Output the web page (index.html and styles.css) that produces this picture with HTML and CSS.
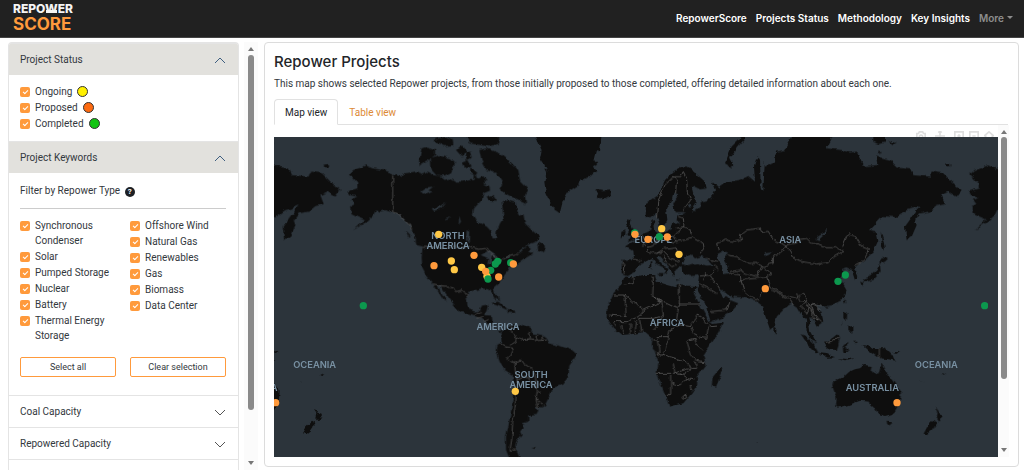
FILE: index.html
```
<!DOCTYPE html>
<html lang="en">
<head>
  <meta charset="UTF-8" />
  <meta name="viewport" content="width=device-width, initial-scale=1" />
  <title>Repower Score</title>
  <link rel="stylesheet" href="styles.css">
</head>
<body>
  <!-- NAVBAR -->
  <header class="navbar">
    <a class="logo" href="#"><span class="logo-top">REPO<span class="logo-w">W</span>ER</span><span class="logo-bottom">SCORE</span></a>
    <nav class="nav-links">
      <a href="#">RepowerScore</a>
      <a href="#">Projects Status</a>
      <a href="#">Methodology</a>
      <a href="#">Key Insights</a>
      <a class="more" href="#">More</a>
    </nav>
  </header>

  <main class="layout">
    <!-- FILTERS -->
    <aside class="sidebar">
      <div class="accordion">
        <button class="acc-header open" type="button">Project Status
          <svg class="chevron" viewBox="0 0 12 12"><path d="M1 9l5-5 5 5" /></svg>
        </button>
        <div class="acc-body status">
          <label class="check"><input type="checkbox" checked />Ongoing <i class="dot yellow"></i></label>
          <label class="check"><input type="checkbox" checked />Proposed <i class="dot orange"></i></label>
          <label class="check"><input type="checkbox" checked />Completed <i class="dot green"></i></label>
        </div>

        <button class="acc-header open" type="button">Project Keywords
          <svg class="chevron" viewBox="0 0 12 12"><path d="M1 9l5-5 5 5" /></svg>
        </button>
        <div class="acc-body">
          <p class="filter-title">Filter by Repower Type <span class="help">?</span></p>
          <div class="columns">
            <div>
              <label class="check"><input type="checkbox" checked />Synchronous Condenser</label>
              <label class="check"><input type="checkbox" checked />Solar</label>
              <label class="check"><input type="checkbox" checked />Pumped Storage</label>
              <label class="check"><input type="checkbox" checked />Nuclear</label>
              <label class="check"><input type="checkbox" checked />Battery</label>
              <label class="check"><input type="checkbox" checked />Thermal Energy Storage</label>
            </div>
            <div>
              <label class="check"><input type="checkbox" checked />Offshore Wind</label>
              <label class="check"><input type="checkbox" checked />Natural Gas</label>
              <label class="check"><input type="checkbox" checked />Renewables</label>
              <label class="check"><input type="checkbox" checked />Gas</label>
              <label class="check"><input type="checkbox" checked />Biomass</label>
              <label class="check"><input type="checkbox" checked />Data Center</label>
            </div>
          </div>
          <div class="columns buttons">
            <button class="btn" type="button">Select all</button>
            <button class="btn" type="button">Clear selection</button>
          </div>
        </div>

        <button class="acc-header" type="button">Coal Capacity
          <svg class="chevron" viewBox="0 0 12 12"><path d="M1 4l5 5 5-5" /></svg>
        </button>
        <button class="acc-header" type="button">Repowered Capacity
          <svg class="chevron" viewBox="0 0 12 12"><path d="M1 4l5 5 5-5" /></svg>
        </button>
        <div class="acc-header"></div>
      </div>
      <div class="scrollbar"><i class="up"></i><i class="thumb"></i><i class="down"></i></div>
    </aside>

    <!-- PROJECTS -->
    <section class="panel">
      <h1>Repower Projects</h1>
      <p class="intro">This map shows selected Repower projects, from those initially proposed to those completed, offering detailed information about each one.</p>
      <div class="tabs">
        <button class="tab active" type="button">Map view</button>
        <button class="tab" type="button">Table view</button>
      </div>

      <div class="map-row">
        <div class="map-column">
          <div class="modebar">
            <svg viewBox="0 0 12 12"><path d="M1 3h2l1-2h4l1 2h2v8H1z" /><circle cx="6" cy="7" r="2" /></svg>
            <svg class="pan" viewBox="0 0 12 12"><path d="M6 0v12M0 6h12M4 2l2-2 2 2" /></svg>
            <svg viewBox="0 0 12 12"><path d="M1 1h10v10H1zM4 6h4M6 4v4" /></svg>
            <svg viewBox="0 0 12 12"><path d="M1 1h10v10H1zM4 6h4" /></svg>
            <svg viewBox="0 0 12 12"><path d="M0 6l6-5 6 5M2 5v6h8V5" /></svg>
          </div>
          <svg class="map" viewBox="0 0 2172 960" preserveAspectRatio="xMidYMid slice" role="img" aria-label="World map of projects">
            <defs>
              <filter id="coast" filterUnits="userSpaceOnUse" x="-100" y="-60" width="2400" height="1100" color-interpolation-filters="sRGB">
                <feTurbulence type="fractalNoise" baseFrequency="0.05" numOctaves="3" seed="4" />
                <feDisplacementMap in="SourceGraphic" scale="14" xChannelSelector="R" yChannelSelector="G" />
              </filter>
              <g id="world">
                <!-- north america -->
                <g transform="translate(-12 -21)">
                  <path class="land" d="M237 133L250 120 275 112 290 106 310 115 345 122 368 130 390 140 405 130 420 128 440 124 455 135 470 125 490 135 510 140 525 150 545 145 560 155 580 155 600 150 610 150 612 130 620 145 628 145 640 135 652 150 640 162 658 168 660 182 640 190 635 210 612 235 608 255 620 275 650 290 660 300 668 325 678 325 680 305 690 280 700 265 698 235 695 215 710 208 735 215 745 258 760 252 765 280 785 300 808 320 800 335 770 345 745 365 752 366 768 348 782 352 778 365 790 370 765 385 745 400 735 398 740 388 722 405 715 420 700 440 690 455 668 475 672 490 682 505 678 512 665 490 655 478 635 475 615 480 598 485 590 500 592 525 600 541 614 545 630 543 636 527 654 524 650 542 642 555 665 557 668 580 680 600 700 605 722 598 722 610 700 612 688 606 668 585 650 580 635 565 610 555 570 545 545 515 520 480 510 463 503 463 510 485 530 515 520 510 502 480 490 462 470 440 457 415 455 380 458 350 440 335 425 300 418 285 400 265 385 250 367 247 345 240 330 245 318 238 310 255 290 275 250 300 285 268 265 260 245 250 240 230 255 222 245 208 262 200 240 195 232 185 262 175 262 160z" />
                  <path class="land" d="M455 55L472 50 495 58 495 75 475 92 450 106 447 90zM482 85L505 75 540 85 555 100 540 130 520 140 500 137 485 120zM490 30L520 21 548 30 550 45 525 48zM558 60L575 45 590 62 578 82zM585 10L683 10 685 40 660 50 630 45 600 40zM585 70L600 65 605 80 590 90zM578 95L592 90 602 110 585 115zM600 112L622 125 615 135 602 130zM628 60L650 55 690 70 720 95 745 120 750 155 775 180 765 195 768 222 740 208 715 195 690 180 700 160 680 130 650 120 635 90zM650 200L668 195 682 215 660 215zM800 350L812 335 820 345 825 362 818 368 802 362zM408 305L418 315 415 322zM435 330L460 350 440 345zM160 105L178 104 175 111 164 112zM676 490L688 503 690 515 684 508zM664 520L680 515 705 528 712 540 690 530zM712 540L735 542 735 549 715 548z" />
                  <path class="sea" d="M450 185L468 172 490 170 475 182 488 185 470 193zM485 235L510 228 530 215 512 235 492 243zM525 265L545 258 530 270zM568 260L573 275 566 285zM590 300L598 305 596 340 588 330zM632 375L655 362 678 376 675 386 665 378 662 400 652 402 655 385zM680 385L700 393 680 402zM704 383L718 378 712 386z" />
                  <path class="border" d="M368 130V247L385 250 400 268 418 285 425 300M458 352H600L625 358 645 355 672 378 690 395 712 380 735 375 745 365M490 462L520 468 550 470 560 485 575 480 592 500M612 555L622 548 635 548M622 565L640 560M640 575L655 568" />
                </g>

                <!-- south america -->
                <g transform="translate(708 459)">
                  <path class="land" d="M-25 130L-5 112 8 105 22 112 40 105 62 118 70 130 95 135 110 145 118 160 150 168 185 180 198 190 195 205 178 230 175 260 160 280 130 292 120 315 105 345 95 352 80 350 85 362 80 375 55 378 55 395 38 400 42 410 30 425 35 435 20 455 15 470 25 485 35 510 0 510-12 480-12 440-3 400 5 350 13 290 8 255-18 238-32 210-40 185-38 165-22 155zM65 474L78 472 74 477z" />
                  <path class="border" d="M5 108L2 130 22 142 18 155 0 165M-30 160L-15 170 10 175 5 185-8 205 5 220 15 215 35 210 42 222 65 235 75 255 82 300 95 310M40 150L62 145 58 125M80 150L78 135M100 152L98 140M22 142L40 150 60 150 80 152 110 150M15 215L15 240 20 255 22 290 15 350 8 400 5 450 0 480 20 480M22 270L48 258 68 280 82 300 78 330 85 352M78 325L100 345" />
                </g>

                <!-- greenland, iceland, europe and asia -->
                <g transform="translate(708 -21)">
                  <path class="land" d="M72 10L95 60 90 85 100 100 112 125 103 155 108 190 125 230 150 247 158 215 175 185 205 165 210 150 240 140 260 122 248 110 262 100 252 85 258 60 270 65 275 10zM255 180L265 190 260 200 280 208 303 195 300 178 280 180 270 178z" />
                  <path class="land" d="M530 110L515 110 490 125 465 150 445 195 408 222 407 258 420 265 438 252 445 268 450 292 462 287 472 270 468 235 485 210 490 188 506 192 490 220 494 246 520 246 530 250 502 256 500 270 512 282 490 277 485 297 470 305 445 307 435 300 432 270 420 275 422 302 400 312 385 325 370 335 348 350 370 362 372 387 335 390 335 432 350 438 375 425 390 403 410 392 425 382 440 402 460 412 466 424 458 435 468 430 476 418 460 405 442 385 450 378 470 400 478 418 488 437 498 438 496 420 512 410 518 408 520 430 545 438 567 435 565 455 560 480 585 520 603 577 630 565 665 545 685 520 660 510 650 498 642 508 625 480 640 480 665 500 700 502 735 510 760 530 765 555 780 598 795 590 800 560 830 530 845 520 860 530 875 555 888 570 890 605 905 630 922 640 915 630 900 600 895 565 910 570 920 590 940 575 935 550 920 525 940 530 965 525 995 510 1010 480 1008 475 990 445 1000 430 995 420 1012 415 1025 420 1035 450 1045 440 1035 415 1050 400 1070 385 1090 365 1105 330 1100 305 1080 300 1120 258 1160 262 1190 240 1210 235 1230 225 1205 262 1185 290 1190 330 1205 320 1220 285 1215 270 1230 250 1260 245 1280 228 1305 222 1295 195 1315 185 1340 200 1355 180 1325 155 1300 130 1265 125 1260 140 1210 135 1200 115 1160 110 1140 90 1102 80 1105 105 1060 108 1040 65 1020 68 995 60 950 55 967 21 970 10 850 10 825 60 798 65 795 95 765 110 765 85 760 180 752 175 750 85 742 80 732 110 735 155 715 138 690 150 650 155 625 172 605 155 615 180 605 205 575 215 565 235 545 245 558 210 548 185 545 165 570 178 590 175 585 155 550 125z" />
                  <path class="land" d="M352 265L365 268 362 280 372 300 378 325 350 336 360 320 352 310 358 300 348 285zM335 305L347 302 345 318 332 324zM422 395L427 393 427 418 421 415zM440 432L458 432 455 440zM500 445L515 447 502 449zM705 10L665 50 645 100 665 112 670 105 660 85 675 60 705 25zM1090 10L1125 21 1125 38 1105 42 1090 35zM1135 30L1157 40 1150 45zM1105 65L1120 68 1106 72zM1305 105L1320 102 1318 110zM1112 305L1122 340 1125 365 1116 350zM1108 395L1120 378 1135 385 1125 395 1110 400zM1110 400L1112 425 1095 445 1065 453 1058 448 1080 440 1100 420zM1050 455L1062 458 1056 468zM1005 505L1010 520 1002 512zM790 592L800 600 796 610 790 602z" />
                  <path class="sea" d="M518 402L530 375 540 370 555 385 575 378 600 395 612 408 590 410 560 402 535 408zM622 375L642 365 655 372 642 380 650 400 655 430 640 432 635 405 625 392zM915 325L940 310 948 290 945 312 925 330zM760 370L790 366 765 378zM545 240L555 225 560 245zM532 235L538 222 542 235z" />
                  <path class="border" d="M440 260L443 215 465 165 490 140 512 140 520 125 530 145 532 190 542 210 520 240M490 140L502 155 500 190M500 295L520 290 540 295 545 320 580 340 582 355 570 370M505 260L520 265 522 290 505 305 490 320 500 335 545 325M445 310L440 340 410 350 415 365 440 370 465 355 500 350 510 375M400 315L410 335 400 350M465 330L490 340 500 330M440 370L460 365 480 385 510 395M460 375L470 395 485 410 500 405M335 400L345 405 342 432M372 388L395 392M612 408L625 420M570 438L600 435 612 420M590 385L625 395M625 362L620 340 650 330 675 335 695 330 690 315 710 300 750 295 755 306 775 304 790 330 815 340 830 350 845 370 850 385 880 395 920 402 955 398 965 385 998 365 980 350 945 350 925 342 905 340 890 325 870 328 862 338 830 345M998 350L1010 320 1015 312 1035 318 1050 345 1075 355 1070 375 1050 400 1035 408M655 375L680 380 720 400 740 400 760 410 790 400 790 380 820 360 830 345M660 425L690 420 710 430 740 440 755 410M655 430L690 435 700 480 725 500 745 510M690 450L740 445 770 440 780 470 820 495 860 505 880 490 890 510 870 530M770 440L785 430 760 415M765 480L750 500M785 480L820 500 840 510 850 525M870 530L890 550 905 520 935 530M890 510L905 530 920 570M630 480L610 450 600 435M565 460L595 475 620 490M590 430L580 450M600 545L650 540 660 515" />
                </g>

                <!-- africa -->
                <g transform="translate(708 459)">
                  <path class="land" d="M560-10L530-10 505-20 495-8 470-15 440-25 435-45 400-45 370-38 345-40 335-15 310 10 292 48 290 85 310 115 335 135 370 132 405 125 428 145 425 165 447 210 440 250 465 312 478 350 520 340 545 310 565 280 560 260 587 225 580 195 590 180 625 130 641 98 605 102 590 82 570 45 550 8zM635 228L637 245 618 293 605 290 608 262zM735 453L742 453 740 458z" />
                  <path class="border" d="M345-15L370-20 368-40M310 15H345L400 60 455 35 428 20 430-40M345 15L348 80 300 75M400 60L385 80 350 95 310 95M428 20L500 55 508 45V-20M508 42H570M455 35L460 75 440 110 430 120M380 90L375 130M362 100V132M388 85L395 125M335 105L340 132M310 95L320 110M385 85H430L450 80M505 55L500 85 510 105 540 110 555 90 565 75 580 85 600 110 620 108M440 140H475L480 120 510 105M540 110L560 140 590 145 595 110M430 150L445 150 450 185 440 190M475 140L465 180 450 200M445 190L480 200 530 215 540 235 490 250H440M530 150L540 190 560 215 585 218M535 150L555 145 560 165 580 180M490 220L495 250 520 255 545 235 560 235M482 255V310L465 315M485 280L510 285 530 265 550 270M510 250L530 265M518 320L525 315 530 322 522 328zM540 285L545 300M560 235L555 215" />
                </g>

                <!-- south east asia and oceania -->
                <g transform="translate(1458 459)">
                  <path class="land" d="M122 132L140 140 165 165 178 188 170 190 145 165zM178 190L200 192 225 202 205 203 180 196zM232 204L260 207 285 205 260 212zM193 155L210 150 235 130 240 145 235 165 230 180 205 178 195 168zM248 165L270 155 255 168 265 185 250 188zM280 155L292 155 285 160zM250 65L262 70 260 90 250 85zM265 110L280 108 280 128 265 120zM250 92L242 108 248 100zM252 28L258 30 254 42zM308 165L325 168 345 175 375 175 395 195 407 212 385 208 360 205 340 190 325 180zM400 188L420 185 412 192zM195 50L205 50 198 58z" />
                  <path class="land" d="M217 288L220 275 250 262 268 245 285 238 300 235 312 225 335 228 332 242 355 255 365 220 375 245 395 265 410 285 423 305 420 335 400 372 378 378 355 372 342 350 325 335 300 332 265 345 235 353 228 345 230 325zM380 392L397 394 388 410 382 405zM525 352L538 370 550 375 538 395 530 385 533 372zM520 392L530 398 515 420 500 433 490 430 500 412zM480 268L492 280 484 272zM545 255L558 248 548 258z" />
                  <path class="border" d="M358 175V205M195 157L215 155 238 142M110 10L120 35 135 30 140 50 155 60 160 85M140 50L165 40 180 60M150 60L185 95M155 85L175 90" />
                </g>
              </g>
            </defs>

            <rect class="sea" width="2172" height="960" />
            <g filter="url(#coast)">
              <use href="#world" />
              <use href="#world" x="-1864" />
              <use href="#world" x="1864" />
            </g>

            <g class="map-labels">
              <text x="522" y="305">NORTH</text>
              <text x="522" y="335">AMERICA</text>
              <text x="672" y="580">AMERICA</text>
              <text x="771" y="723">SOUTH</text>
              <text x="771" y="753">AMERICA</text>
              <text x="1138" y="319">EUROPE</text>
              <text x="1179" y="567">AFRICA</text>
              <text x="1549" y="318">ASIA</text>
              <text x="1795" y="762">AUSTRALIA</text>
              <text x="-69" y="762">AUSTRALIA</text>
              <text x="122" y="694">OCEANIA</text>
              <text x="1987" y="694">OCEANIA</text>
            </g>

            <g class="pin-green">
              <circle cx="268" cy="506" r="11" />
              <circle cx="2132" cy="506" r="11" />
              <circle cx="664" cy="381" r="11" />
              <circle cx="671" cy="373" r="11" />
              <circle cx="650" cy="400" r="11" />
              <circle cx="710" cy="377" r="11" />
              <circle cx="1082" cy="288" r="11" />
              <circle cx="1156" cy="299" r="11" />
              <circle cx="1692" cy="433" r="11" />
              <circle cx="1714" cy="414" r="11" />
            </g>
            <g class="pin-yellow">
              <circle cx="494" cy="292" r="11" />
              <circle cx="532" cy="372" r="11" />
              <circle cx="541" cy="398" r="11" />
              <circle cx="623" cy="391" r="11" />
              <circle cx="639" cy="418" r="11" />
              <circle cx="724" cy="763" r="11" />
              <circle cx="1163" cy="275" r="11" />
              <circle cx="1215" cy="352" r="11" />
            </g>
            <g class="pin-orange">
              <circle cx="480" cy="386" r="11" />
              <circle cx="600" cy="355" r="11" />
              <circle cx="635" cy="403" r="11" />
              <circle cx="674" cy="420" r="11" />
              <circle cx="718" cy="381" r="11" />
              <circle cx="1083" cy="292" r="11" />
              <circle cx="1122" cy="307" r="11" />
              <circle cx="1180" cy="300" r="11" />
              <circle cx="1474" cy="455" r="11" />
              <circle cx="1869" cy="797" r="11" />
              <circle cx="5" cy="797" r="11" />
            </g>
            <circle class="pin-green" cx="642" cy="426" r="11" />
          </svg>
        </div>
        <div class="scrollbar map-scroll"><i class="up"></i><i class="thumb"></i><i class="down"></i></div>
      </div>
    </section>
  </main>
</body>
</html>
```
FILE: styles.css
```
* {
  box-sizing: border-box;
}

body {
  margin: 0;
  height: 100vh;
  display: flex;
  flex-direction: column;
  overflow: hidden;
  background: #fff;
  color: #33383d;
  font-family: Roboto, "Open Sans", sans-serif;
  font-size: 10px;
  line-height: 15px;
}

button {
  font: inherit;
  color: inherit;
  cursor: pointer;
}

/* navbar */
.navbar {
  flex: none;
  display: flex;
  justify-content: space-between;
  align-items: center;
  height: 38px;
  padding: 0 11px 0 13px;
  background: #212121;
  border-bottom: 1px solid #444;
}

.logo {
  display: flex;
  flex-direction: column;
  font-family: Inter, sans-serif;
  font-weight: 700;
  text-decoration: none;
}

.logo-top {
  font-size: 12px;
  line-height: 14px;
  font-weight: 800;
  color: #f4f4f4;
}

.logo-w {
  position: relative;
}

/* flat base under the W, like a plant with chimneys */
.logo-w::after {
  content: "";
  position: absolute;
  left: 1px;
  right: 1px;
  bottom: 3px;
  height: 3px;
  background: #f4f4f4;
}

.logo-bottom {
  font-size: 17px;
  line-height: 17px;
  padding-bottom: 3px;
  color: #ff9a3c;
}

.nav-links {
  display: flex;
  gap: 9px;
  font-family: Inter, sans-serif;
}

.nav-links a {
  color: #fff;
  font-weight: 600;
  text-decoration: none;
}

.nav-links .more {
  color: #8d8d8d;
}

.more::after {
  content: "";
  display: inline-block;
  margin-left: 3px;
  vertical-align: 3px;
  border: 3px solid transparent;
  border-top-color: #8d8d8d;
  border-bottom: 0;
}

/* layout */
.layout {
  flex: 1;
  min-height: 0;
  display: flex;
  gap: 6px;
  padding: 4px 5px 3px 8px;
}

.sidebar {
  flex: none;
  display: flex;
  gap: 5px;
  width: 250px;
  margin-bottom: -3px;
}

.accordion {
  flex: 1;
  overflow: hidden;
  border: 1px solid #e4e4e4;
  border-bottom: 0;
  border-radius: 4px 4px 0 0;
}

.acc-header {
  display: flex;
  justify-content: space-between;
  align-items: center;
  width: 100%;
  height: 32px;
  padding: 0 12px 0 11px;
  background: #fff;
  border: 0;
  border-top: 1px solid #e4e4e4;
  text-align: left;
}

.acc-header.open {
  background: #e2e1dd;
}

.chevron {
  width: 12px;
  height: 12px;
  fill: none;
  stroke: #555;
}

.open .chevron {
  stroke: #3f5f80;
}

.acc-body {
  padding: 10px 12px 18px 11px;
}

.acc-body.status {
  padding: 9px 11px;
}

.check {
  display: flex;
  align-items: flex-start;
  gap: 5px;
  margin-bottom: 1px;
}

.check input {
  appearance: none;
  flex: none;
  position: relative;
  width: 10px;
  height: 10px;
  margin: 3px 0 0;
  background: #ff9a3c;
  border-radius: 2px;
}

.check input:checked::after {
  content: "";
  position: absolute;
  left: 3px;
  top: 3px;
  width: 4px;
  height: 2px;
  border: solid #fff;
  border-width: 0 0 1px 1px;
  transform: rotate(-45deg);
}

.dot {
  width: 11px;
  height: 11px;
  margin-top: 2px;
  border: 1px solid #333;
  border-radius: 50%;
}

.dot.yellow {
  background: #fff000;
}

.dot.orange {
  background: #fd6a10;
}

.dot.green {
  background: #12c412;
}

.filter-title {
  margin: 0 0 9px;
  padding-bottom: 10px;
  border-bottom: 1px solid #ccc;
}

.help {
  display: inline-block;
  width: 10px;
  height: 10px;
  margin-left: 2px;
  border-radius: 50%;
  background: #1d2024;
  color: #fff;
  font-size: 8px;
  font-weight: 700;
  line-height: 10px;
  text-align: center;
}

.columns {
  display: grid;
  grid-template-columns: 1fr 1fr;
  gap: 14px;
}

.buttons {
  margin-top: 13px;
}

.btn {
  height: 20px;
  padding: 0;
  background: #fff;
  border: 1px solid #ff9a3c;
  border-radius: 2px;
  font-size: 9px;
}

/* scrollbars */
.scrollbar {
  flex: none;
  display: flex;
  flex-direction: column;
  align-items: center;
  width: 14px;
  padding: 5px 0;
  background: #fbfbfb;
}

.scrollbar .up,
.scrollbar .down {
  border: 3px solid transparent;
}

.scrollbar .up {
  border-top: 0;
  border-bottom: 4px solid #777;
}

.scrollbar .down {
  margin-top: auto;
  border-bottom: 0;
  border-top: 4px solid #777;
}

.scrollbar .thumb {
  width: 6px;
  height: 85%;
  margin-top: 4px;
  background: #8a8a8a;
  border-radius: 3px;
}

/* projects panel */
.panel {
  flex: 1;
  min-width: 0;
  display: flex;
  flex-direction: column;
  padding: 10px 10px 9px 9px;
  border: 1px solid #dcdcdc;
  border-radius: 4px;
}

h1 {
  margin: 0;
  font-family: Inter, sans-serif;
  font-size: 15px;
  line-height: 18px;
  font-weight: 500;
  color: #222529;
}

.intro {
  margin: 5px 0 8px;
}

.tabs {
  display: flex;
  border-bottom: 1px solid #e1e1e1;
}

.tab {
  height: 26px;
  margin-bottom: -1px;
  padding: 0 10px;
  background: none;
  border: 1px solid transparent;
  border-radius: 4px 4px 0 0;
  color: #dd8a35;
}

.tab.active {
  background: #fff;
  border-color: #e1e1e1;
  border-bottom-color: #fff;
  color: #222529;
}

.map-row {
  flex: 1;
  min-height: 0;
  display: flex;
}

.map-column {
  flex: 1;
  min-width: 0;
  display: flex;
  flex-direction: column;
}

.modebar {
  flex: none;
  display: flex;
  justify-content: flex-end;
  gap: 5px;
  height: 12px;
  padding: 6px 4px 0 0;
  overflow: hidden;
}

.modebar svg {
  flex: none;
  width: 10px;
  height: 10px;
  fill: none;
  stroke: #dedede;
  stroke-width: 2;
}

.modebar .pan {
  margin: 0 4px;
}

.map {
  flex: 1;
  min-height: 0;
  width: 100%;
  background: #2c343b;
}

.map-scroll {
  width: 11px;
  margin-right: -1px;
  padding: 5px 0;
}

.map-scroll .thumb {
  height: 75%;
  margin-top: 3px;
}

/* map */
.land {
  fill: #0e0e0e;
}

.sea {
  fill: #2c343b;
}

.border {
  fill: none;
  stroke: #666;
  stroke-width: 2;
}

.map-labels {
  fill: #7890a2;
  font-family: Inter, sans-serif;
  font-size: 28px;
  font-weight: 600;
  text-anchor: middle;
}

.pin-green {
  fill: #0c984e;
}

.pin-yellow {
  fill: #ffc846;
}

.pin-orange {
  fill: #ff9a3c;
}
```
